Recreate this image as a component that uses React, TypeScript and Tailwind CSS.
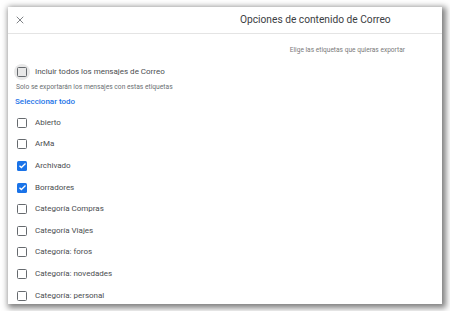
import { X } from "lucide-react";

const labels = [
  { name: "Abierto", checked: false },
  { name: "ArMa", checked: false },
  { name: "Archivado", checked: true },
  { name: "Borradores", checked: true },
  { name: "Categoría Compras", checked: false },
  { name: "Categoría Viajes", checked: false },
  { name: "Categoría: foros", checked: false },
  { name: "Categoría: novedades", checked: false },
  { name: "Categoría: personal", checked: false },
];

function Checkbox({ checked }: { checked: boolean }) {
  if (checked) {
    return (
      <div className="flex h-[10px] w-[10px] shrink-0 items-center justify-center rounded-[1.5px] bg-[#1a73e8]">
        <svg viewBox="0 0 24 24" className="h-[9px] w-[9px]" fill="none" stroke="white" strokeWidth="3.5">
          <path d="M4 12.5l5 5L20 6.5" />
        </svg>
      </div>
    );
  }
  return <div className="h-[10px] w-[10px] shrink-0 rounded-[1.5px] border-[1.5px] border-[#666a6e]" />;
}

export default function App() {
  return (
    <div
      className="h-[311px] w-[450px] overflow-hidden bg-white pl-[8px] pt-[7px]"
      style={{ fontFamily: "Roboto, 'Liberation Sans', sans-serif" }}
    >
      <div className="h-[297px] w-[434px] overflow-hidden bg-white shadow-[2px_2px_6px_2px_rgba(0,0,0,0.5)]">
        {/* Header */}
        <div className="flex h-[27px] items-center border-b border-[#e4e4e4]">
          <X className="ml-[6px] text-[#5f6368]" size={12} strokeWidth={1.6} />
          <span className="ml-[214px] text-[10.2px] text-[#3c4043]">Opciones de contenido de Correo</span>
        </div>

        {/* Body */}
        <div className="pl-[8px]">
          <div className="mt-[12px] flex h-[10px] items-center justify-end pr-[37px] text-[6.6px] text-[#7a7a7a]">
            Elige las etiquetas que quieras exportar
          </div>

          <div className="mt-[8px] flex h-[16px] items-center">
            <div className="-ml-[2px] flex h-[16px] w-[16px] items-center justify-center rounded-full bg-[#e8e8e8]">
              <Checkbox checked={false} />
            </div>
            <span className="ml-[5px] text-[8px] text-[#4a4d50]">Incluir todos los mensajes de Correo</span>
          </div>

          <div className="mt-[3px] flex h-[8px] items-center text-[6.7px] text-[#6b6f73]">
            Solo se exportarán los mensajes con estas etiquetas
          </div>

          <div className="-ml-[1px] mt-[6px] flex h-[10px] items-center text-[8px] font-medium text-[#1a73e8]">
            Seleccionar todo
          </div>

          <div className="mt-[5px] flex flex-col">
            {labels.map((l) => (
              <div key={l.name} className="flex h-[21.6px] items-center">
                <div className="ml-[1px] flex">
                  <Checkbox checked={l.checked} />
                </div>
                <span className="ml-[8px] text-[8px] text-[#4a4d50]">{l.name}</span>
              </div>
            ))}
          </div>
        </div>
      </div>
    </div>
  );
}
